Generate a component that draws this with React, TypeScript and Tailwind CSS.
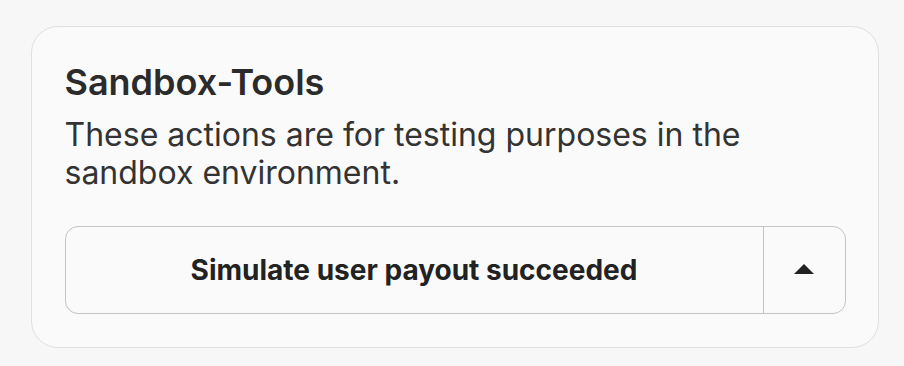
export default function App() {
  return (
    <div
      className="min-h-screen bg-[#f7f7f7] pl-[31px] pr-[25px] pt-[26px] pb-[19px]"
      style={{ fontFamily: 'Inter, "Noto Sans", sans-serif' }}
    >
      <div className="rounded-[27px] border-[1.5px] border-[#e0e0e0] bg-[#fafafa] px-[32.5px] pt-[33px] pb-[33px]">
        <h2 className="text-[36px] leading-[44px] font-semibold text-[#2b2b2b]">
          Sandbox-Tools
        </h2>
        <p className="mt-[12px] text-[32px] leading-[38px] text-[#333333]">
          These actions are for testing purposes in the
          <br />
          sandbox environment.
        </p>
        <div className="mt-[34px] flex h-[88px] rounded-[13px] border-[1.5px] border-[#c4c4c4]">
          <button className="flex flex-1 items-center justify-center text-[28px] font-bold text-[#222222]">
            Simulate user payout succeeded
          </button>
          <button className="flex w-[82px] items-center justify-center border-l-[1.5px] border-[#c4c4c4]">
            <svg width="20" height="10" viewBox="0 0 20 10" className="-mt-[2px]">
              <path d="M0 10 L10 0 L20 10 Z" fill="#222222" />
            </svg>
          </button>
        </div>
      </div>
    </div>
  );
}
